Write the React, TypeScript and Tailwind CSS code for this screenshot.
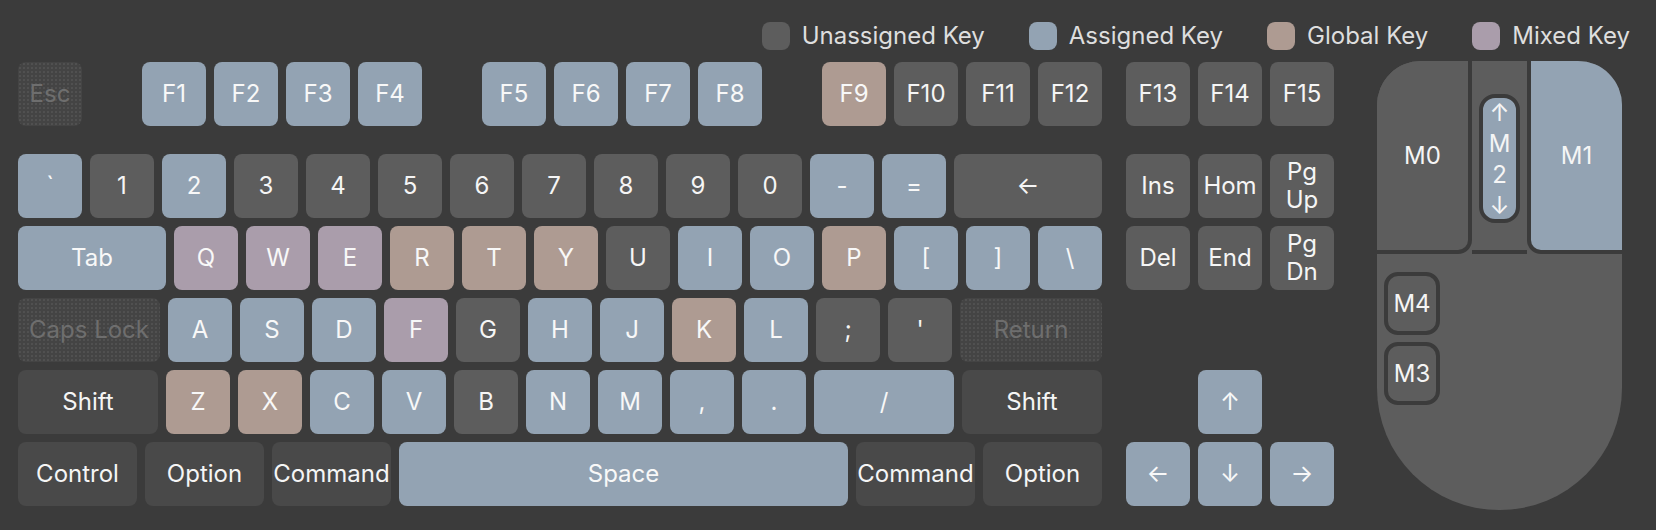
import type { ReactNode } from "react";

type KeyState = "unassigned" | "assigned" | "global" | "mixed" | "modifier" | "disabled";

const stateClass: Record<KeyState, string> = {
  unassigned: "bg-[#5d5d5d] text-[#f5f5f5]",
  assigned: "bg-[#93a3b3] text-[#f8f8f8]",
  global: "bg-[#ae9b92] text-[#f8f8f8]",
  mixed: "bg-[#aa9dab] text-[#f8f8f8]",
  modifier: "bg-[#494949] text-[#f5f5f5]",
  disabled:
    "bg-[#444444] bg-[radial-gradient(circle,#555555_0.6px,transparent_1px)] bg-[length:4px_4px] text-[#6e6e6e]",
};

type KeyDef = { label: ReactNode; state: KeyState; w?: string };

const u = (label: ReactNode, state: KeyState, w?: string): KeyDef => ({ label, state, w });

const fRow: KeyDef[][] = [
  [u("Esc", "disabled")],
  [u("F1", "assigned"), u("F2", "assigned"), u("F3", "assigned"), u("F4", "assigned")],
  [u("F5", "assigned"), u("F6", "assigned"), u("F7", "assigned"), u("F8", "assigned")],
  [u("F9", "global"), u("F10", "unassigned"), u("F11", "unassigned"), u("F12", "unassigned")],
];

const mainRows: KeyDef[][] = [
  [
    u("`", "assigned"),
    u("1", "unassigned"),
    u("2", "assigned"),
    u("3", "unassigned"),
    u("4", "unassigned"),
    u("5", "unassigned"),
    u("6", "unassigned"),
    u("7", "unassigned"),
    u("8", "unassigned"),
    u("9", "unassigned"),
    u("0", "unassigned"),
    u("-", "assigned"),
    u("=", "assigned"),
    u("←", "unassigned", "w-[148px]"),
  ],
  [
    u("Tab", "assigned", "w-[148px]"),
    u("Q", "mixed"),
    u("W", "mixed"),
    u("E", "mixed"),
    u("R", "global"),
    u("T", "global"),
    u("Y", "global"),
    u("U", "unassigned"),
    u("I", "assigned"),
    u("O", "assigned"),
    u("P", "global"),
    u("[", "assigned"),
    u("]", "assigned"),
    u("\\", "assigned"),
  ],
  [
    u("Caps Lock", "disabled", "w-[142px]"),
    u("A", "assigned"),
    u("S", "assigned"),
    u("D", "assigned"),
    u("F", "mixed"),
    u("G", "unassigned"),
    u("H", "assigned"),
    u("J", "assigned"),
    u("K", "global"),
    u("L", "assigned"),
    u(";", "unassigned"),
    u("'", "unassigned"),
    u("Return", "disabled", "w-[142px]"),
  ],
  [
    u("Shift", "modifier", "w-[140px]"),
    u("Z", "global"),
    u("X", "global"),
    u("C", "assigned"),
    u("V", "assigned"),
    u("B", "unassigned"),
    u("N", "assigned"),
    u("M", "assigned"),
    u(",", "assigned"),
    u(".", "assigned"),
    u("/", "assigned", "w-[140px]"),
    u("Shift", "modifier", "w-[140px]"),
  ],
  [
    u("Control", "modifier", "w-[119px]"),
    u("Option", "modifier", "w-[119px]"),
    u("Command", "modifier", "w-[119px]"),
    u("Space", "assigned", "flex-1"),
    u("Command", "modifier", "w-[119px]"),
    u("Option", "modifier", "w-[119px]"),
  ],
];

const twoLine = (a: string, b: string) => (
  <span className="flex flex-col items-center leading-[28px]">
    <span>{a}</span>
    <span>{b}</span>
  </span>
);

const navRows: (KeyDef | null)[][] = [
  [u("Ins", "unassigned"), u("Hom", "unassigned"), u(twoLine("Pg", "Up"), "unassigned")],
  [u("Del", "unassigned"), u("End", "unassigned"), u(twoLine("Pg", "Dn"), "unassigned")],
  [null, null, null],
  [null, u("↑", "assigned"), null],
  [u("←", "assigned"), u("↓", "assigned"), u("→", "assigned")],
];

function Key({ k }: { k: KeyDef }) {
  return (
    <div
      className={`flex h-16 shrink-0 items-center justify-center rounded-lg text-[24px] leading-none ${
        k.w ?? "w-16"
      } ${stateClass[k.state]}`}
    >
      {k.label}
    </div>
  );
}

function Legend() {
  const items: { label: string; color: string }[] = [
    { label: "Unassigned Key", color: "bg-[#5d5d5d]" },
    { label: "Assigned Key", color: "bg-[#93a3b3]" },
    { label: "Global Key", color: "bg-[#ae9b92]" },
    { label: "Mixed Key", color: "bg-[#aa9dab]" },
  ];
  return (
    <div className="mt-[22px] flex h-7 items-center justify-end gap-[44px] pr-[26px]">
      {items.map((item) => (
        <div key={item.label} className="flex items-center gap-[12px]">
          <div className={`h-7 w-7 rounded-lg ${item.color}`} />
          <span className="text-[24px] leading-none text-[#dedede]">{item.label}</span>
        </div>
      ))}
    </div>
  );
}

function Mouse() {
  return (
    <div className="flex h-[449px] w-[245px] shrink-0 flex-col overflow-hidden rounded-t-[44px] rounded-b-[122px] bg-[#5d5d5d] text-[24px] text-[#f5f5f5]">
      <div className="flex h-[193px] shrink-0">
        <div className="flex w-[95px] items-center justify-center rounded-br-[14px] border-r-4 border-b-4 border-[#3b3b3b] bg-[#5d5d5d]">
          M0
        </div>
        <div className="flex flex-1 justify-center border-b-4 border-[#3b3b3b] pt-[33px]">
          <div className="flex h-[129px] w-[41px] flex-col items-center justify-center rounded-[16px] border-4 border-[#3b3b3b] bg-[#93a3b3] leading-[31px]">
            <span>↑</span>
            <span>M</span>
            <span>2</span>
            <span>↓</span>
          </div>
        </div>
        <div className="flex w-[95px] items-center justify-center rounded-bl-[14px] border-b-4 border-l-4 border-[#3b3b3b] bg-[#93a3b3]">
          M1
        </div>
      </div>
      <div className="flex flex-col gap-[7px] pt-[18px] pl-[7px]">
        <div className="flex h-[63px] w-[56px] items-center justify-center rounded-[14px] border-4 border-[#3b3b3b]">
          M4
        </div>
        <div className="flex h-[63px] w-[56px] items-center justify-center rounded-[14px] border-4 border-[#3b3b3b]">
          M3
        </div>
      </div>
    </div>
  );
}

export default function App() {
  return (
    <div className="flex h-[530px] w-[1656px] flex-col overflow-hidden bg-[#3b3b3b] font-['Inter',sans-serif]">
      <Legend />
      <div className="mt-3 flex items-start pl-[18px]">
        <div className="flex w-[1084px] shrink-0 flex-col">
          <div className="mb-7 flex gap-[60px]">
            {fRow.map((group, i) => (
              <div key={i} className="flex gap-2">
                {group.map((k, j) => (
                  <Key key={j} k={k} />
                ))}
              </div>
            ))}
          </div>
          <div className="flex flex-col gap-2">
            {mainRows.map((row, i) => (
              <div key={i} className="flex gap-2">
                {row.map((k, j) => (
                  <Key key={j} k={k} />
                ))}
              </div>
            ))}
          </div>
        </div>

        <div className="ml-6 flex w-[208px] shrink-0 flex-col">
          <div className="mb-7 flex gap-2">
            <Key k={u("F13", "unassigned")} />
            <Key k={u("F14", "unassigned")} />
            <Key k={u("F15", "unassigned")} />
          </div>
          <div className="flex flex-col gap-2">
            {navRows.map((row, i) => (
              <div key={i} className="flex h-16 gap-2">
                {row.map((k, j) =>
                  k ? <Key key={j} k={k} /> : <div key={j} className="h-16 w-16 shrink-0" />
                )}
              </div>
            ))}
          </div>
        </div>

        <div className="ml-[43px] -mt-px">
          <Mouse />
        </div>
      </div>
    </div>
  );
}
